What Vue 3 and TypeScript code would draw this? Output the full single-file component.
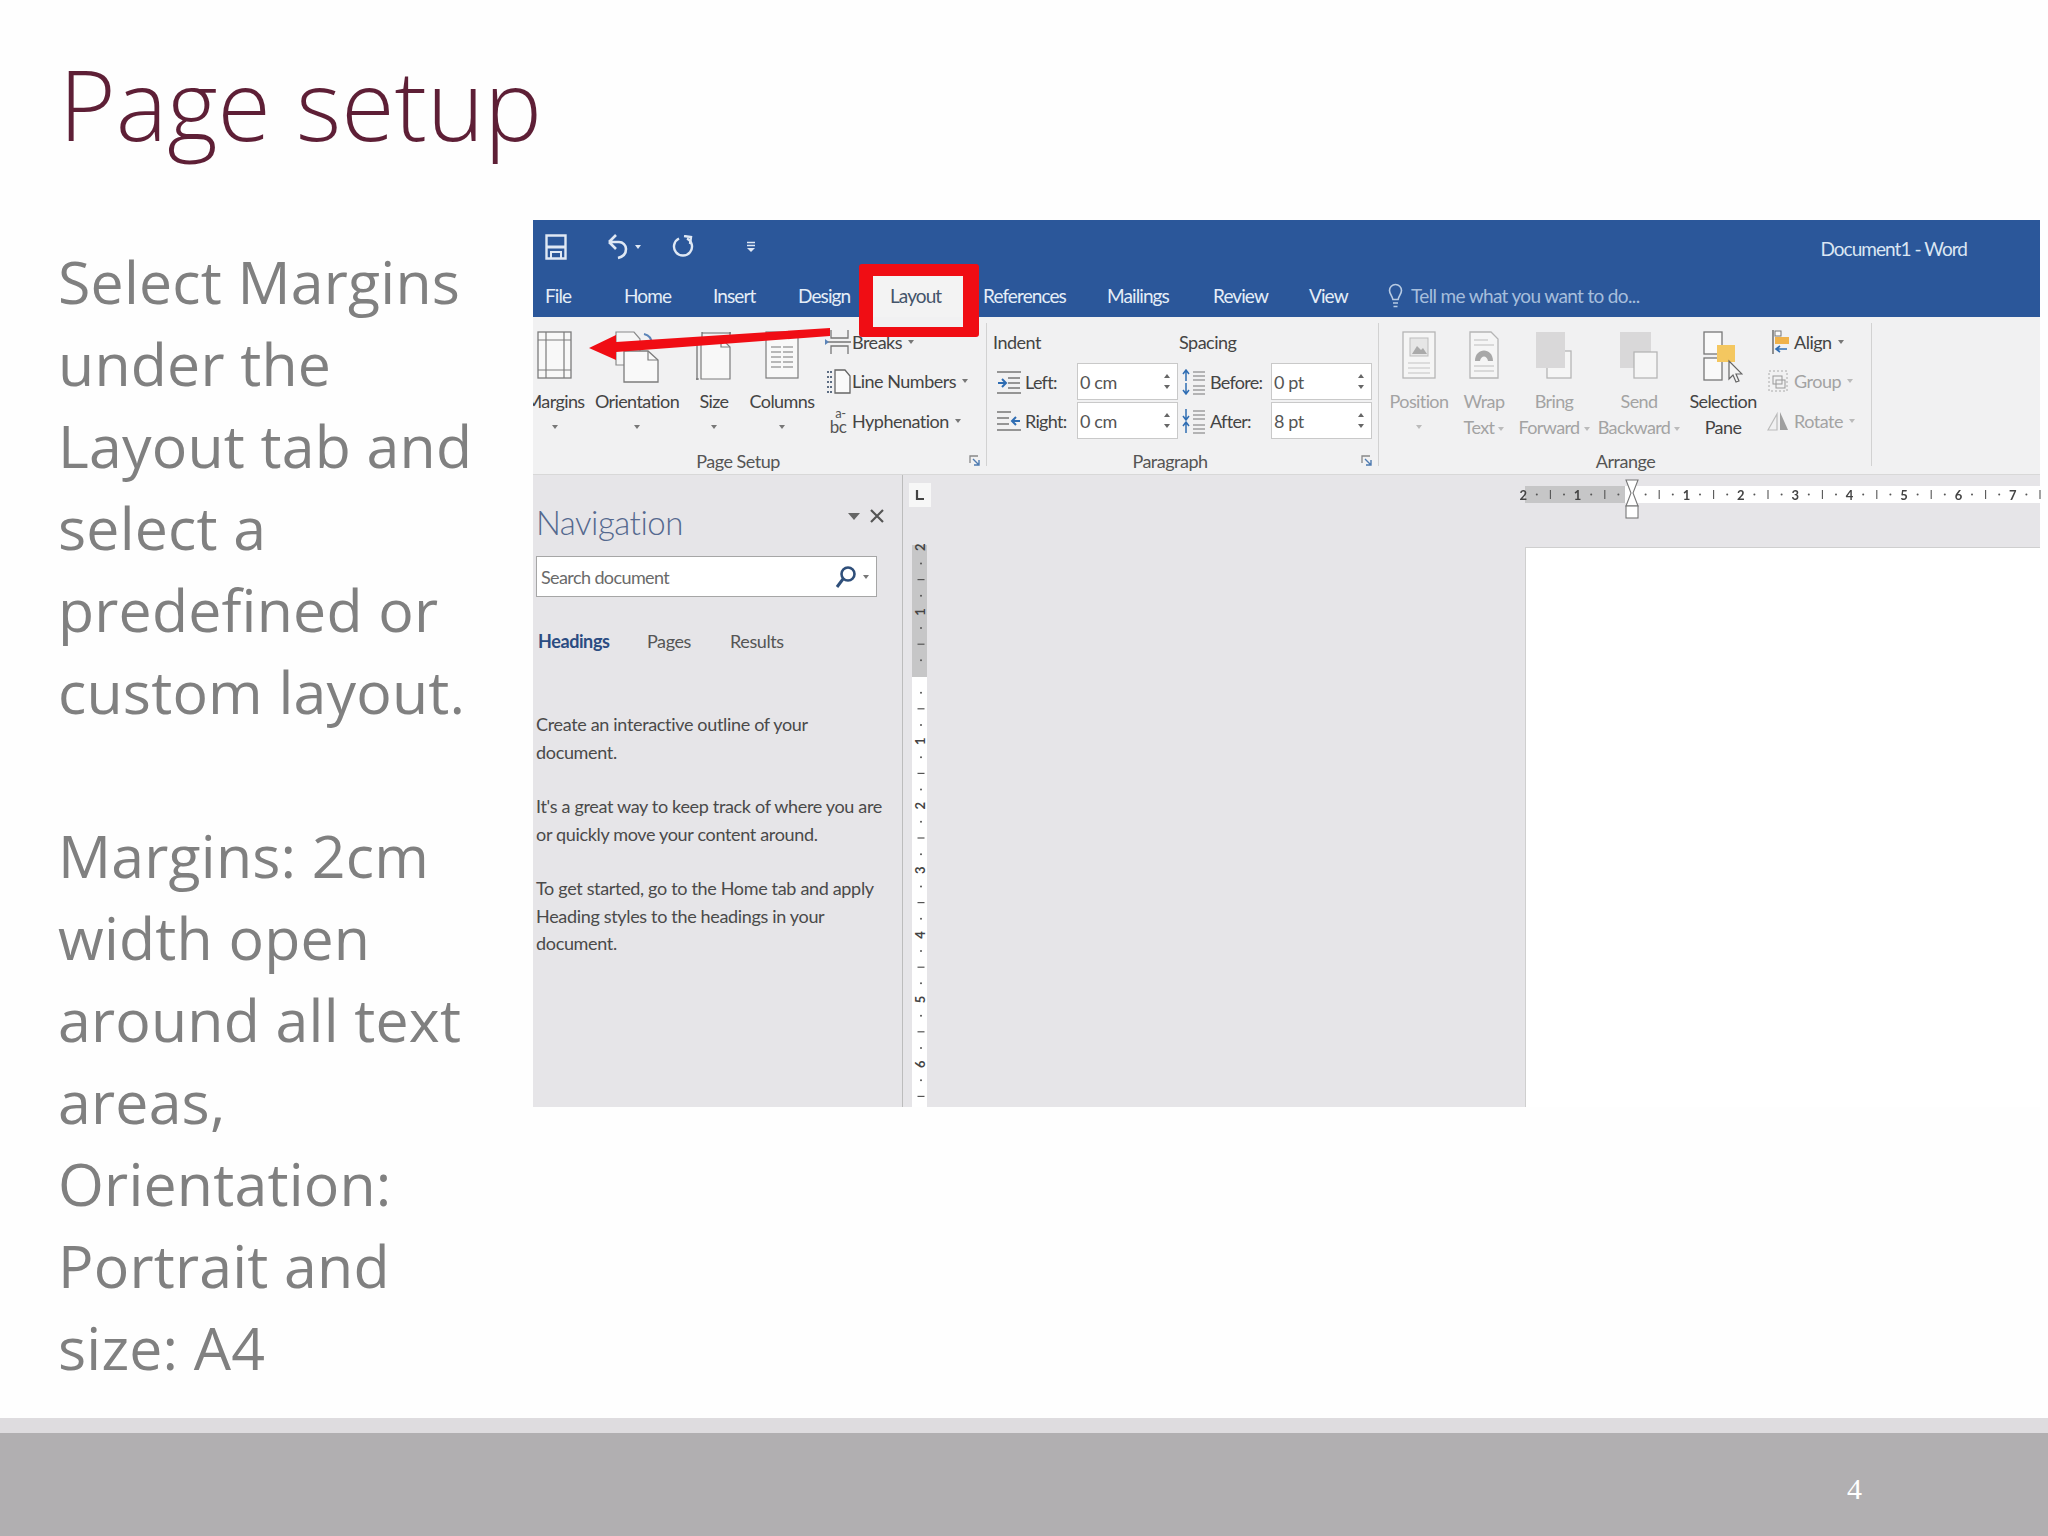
<script setup lang="ts">
const bodyOne: string[] = ['Select Margins', 'under the', 'Layout tab and', 'select a', 'predefined or', 'custom layout.']
const bodyTwo: string[] = ['Margins: 2cm', 'width open', 'around all text', 'areas,', 'Orientation:', 'Portrait and', 'size: A4']

interface Tab { label: string; width: number; active?: boolean }
const tabs: Tab[] = [
  { label: 'File', width: 79 },
  { label: 'Home', width: 89 },
  { label: 'Insert', width: 85 },
  { label: 'Design', width: 75 },
  { label: 'Layout', width: 110, active: true },
  { label: 'References', width: 124 },
  { label: 'Mailings', width: 106 },
  { label: 'Review', width: 96 },
  { label: 'View', width: 79 },
]

const hNums = [-2, -1, 1, 2, 3, 4, 5, 6, 7]
const hX = (n: number) => 107 + n * 54.4
const hTicks: { x: number; dash: boolean }[] = []
for (let i = -8; i <= 30; i++) {
  if (i % 4 === 0) continue
  hTicks.push({ x: 107 + i * 13.6, dash: Math.abs(i % 4) === 2 })
}
const vNums = [-2, -1, 1, 2, 3, 4, 5, 6]
const vY = (n: number) => 201.5 + n * 64.6
const vTicks: { y: number; dash: boolean }[] = []
for (let i = -8; i <= 27; i++) {
  if (i % 4 === 0) continue
  vTicks.push({ y: 201.5 + i * 16.15, dash: Math.abs(i % 4) === 2 })
}
</script>

<template>
  <div class="slide">
    <h1 class="title">Page setup</h1>
    <main class="content">
      <section class="copy">
        <p class="para">
          <span v-for="l in bodyOne" :key="l" class="line">{{ l }}</span>
        </p>
        <p class="para">
          <span v-for="l in bodyTwo" :key="l" class="line">{{ l }}</span>
        </p>
      </section>

      <section class="word">
        <div class="qat">
          <svg class="q-save" width="22" height="26" viewBox="0 0 22 26"><path d="M1.5 1.5h19v23h-19z" fill="none" stroke="#dfe8f4" stroke-width="2.4"/><path d="M1.5 13h19" stroke="#dfe8f4" stroke-width="3"/><path d="M6 25v-7h10v7" fill="none" stroke="#dfe8f4" stroke-width="2"/></svg>
          <svg class="q-undo" width="22" height="26" viewBox="0 0 22 26"><path d="M2 8l7-7M2 8l7 7M2 8h10a7 7 0 0 1 7 7c0 5-4 8-8 9" fill="none" stroke="#dfe8f4" stroke-width="2.6"/></svg>
          <span class="caret light q-c1"></span>
          <svg class="q-redo" width="22" height="24" viewBox="0 0 22 24"><path d="M7 3.5A9 9 0 1 0 15 3.5" fill="none" stroke="#dfe8f4" stroke-width="2.4"/><path d="M12 1l7 1-1 7" fill="none" stroke="#dfe8f4" stroke-width="2.4"/></svg>
          <svg class="q-more" width="10" height="12" viewBox="0 0 10 12"><path d="M1 1.5h8M1 4.5h8" stroke="#dfe8f4" stroke-width="1.4"/><path d="M1 7h8l-4 4z" fill="#dfe8f4"/></svg>
          <span class="doc-title">Document1 - Word</span>
        </div>

        <div class="tabs">
          <span
            v-for="t in tabs"
            :key="t.label"
            class="tab"
            :class="{ active: t.active }"
            :style="{ width: t.width + 'px' }"
          >{{ t.label }}</span>
          <svg class="bulb" width="15" height="26" viewBox="0 0 15 26"><path d="M7.5 1.5a6 6 0 0 1 6 6c0 3-2.6 5-3.4 9H4.9c-.8-4-3.4-6-3.4-9a6 6 0 0 1 6-6zM5 20h5M5.5 23.5h4" fill="none" stroke="#b8cbe3" stroke-width="1.6"/></svg>
          <span class="tell">Tell me what you want to do...</span>
        </div>

        <div class="ribbon">
          <div class="group g-page">
            <div class="g-body">
              <div class="big b-margins">
                <div class="big-icon">
                  <svg width="36" height="48" viewBox="0 0 36 48"><rect x="1" y="1" width="33" height="46" fill="#f8f8f8" stroke="#7c7c7c" stroke-width="1.3"/><path d="M9 1v46M27 1v46M1 9h33M1 39h33" stroke="#7c7c7c" stroke-width="1.2" fill="none"/></svg>
                </div>
                <span class="big-label">Margins</span><span class="caret c-big"></span>
              </div>
              <div class="big b-orient">
                <div class="big-icon">
                  <svg width="44" height="52" viewBox="0 0 44 52"><path d="M1 1h18l6 7v26H1z" fill="#f6f6f6" stroke="#8a8a8a" stroke-width="1.2"/><path d="M9 20h24l10 9v22H9z" fill="#f9f9f9" stroke="#7c7c7c" stroke-width="1.3"/><path d="M33 20v9h10" fill="none" stroke="#7c7c7c" stroke-width="1.2"/><path d="M29 3c5 1 8 5 8 11" fill="none" stroke="#5b84b8" stroke-width="2"/></svg>
                </div>
                <span class="big-label">Orientation</span><span class="caret c-big"></span>
              </div>
              <div class="big b-size">
                <div class="big-icon">
                  <svg width="36" height="50" viewBox="0 0 36 50"><path d="M6 2h29M6 1v5M34 1v5M1 8v41M0 8h3M0 48h3" stroke="#6a6a6a" stroke-width="1.2" fill="none"/><path d="M5 7h20l9 9v32H5z" fill="#f8f8f8" stroke="#7c7c7c" stroke-width="1.2"/><path d="M25 7v9h9" fill="none" stroke="#7c7c7c" stroke-width="1.2"/></svg>
                </div>
                <span class="big-label">Size</span><span class="caret c-big"></span>
              </div>
              <div class="big b-cols">
                <div class="big-icon">
                  <svg width="34" height="48" viewBox="0 0 34 48"><rect x="1" y="1" width="32" height="46" fill="#f8f8f8" stroke="#7c7c7c" stroke-width="1.2"/><path d="M6 16h10M18 16h10M6 21h10M18 21h10M6 26h10M18 26h10M6 31h10M18 31h10M6 36h10M18 36h10" stroke="#777" stroke-width="1.2"/></svg>
                </div>
                <span class="big-label">Columns</span><span class="caret c-big"></span>
              </div>
              <div class="smalls s-page">
                <div class="small">
                  <svg width="26" height="26" viewBox="0 0 26 26"><path d="M6 1v8h17V1M6 25v-8h17v8M3 13h23" fill="none" stroke="#777" stroke-width="1.3"/><path d="M0 10l4 3-4 3z" fill="#5b84b8"/></svg>
                  <span>Breaks</span><span class="caret"></span>
                </div>
                <div class="small">
                  <svg width="26" height="26" viewBox="0 0 26 26"><path d="M10 2h10l5 6v17H10z" fill="#fafafa" stroke="#666" stroke-width="1.3"/><path d="M2 4h5M2 9h5M2 14h5M2 19h5M2 24h5" stroke="#5d6d83" stroke-width="2" stroke-dasharray="2 1"/></svg>
                  <span>Line Numbers</span><span class="caret"></span>
                </div>
                <div class="small">
                  <span class="hy"><i class="hy-a">a-</i><i class="hy-b">bc</i></span>
                  <span>Hyphenation</span><span class="caret"></span>
                </div>
              </div>
            </div>
            <div class="g-label">Page Setup</div>
            <svg class="launcher" width="11" height="11" viewBox="0 0 11 11"><path d="M1 8V1h8" fill="none" stroke="#888" stroke-width="1.3"/><path d="M4 4l6 6M10 5v5H5" fill="none" stroke="#4d7ab0" stroke-width="1.4"/></svg>
          </div>

          <div class="group g-para">
            <div class="para-grid">
              <span class="h-indent">Indent</span>
              <span class="h-spacing">Spacing</span>

              <div class="pf-icon">
                <svg width="24" height="24" viewBox="0 0 24 24"><path d="M0 2h24M11 8h12M11 13h12M11 18h12M0 23h24" stroke="#777" stroke-width="1.3"/><path d="M1 13h7M5 9l4 4-4 4" fill="none" stroke="#2f6db3" stroke-width="2"/></svg>
              </div>
              <span class="pf-label">Left:</span>
              <div class="spin"><span>0 cm</span><span class="arrows"><i class="up"></i><i class="down"></i></span></div>
              <div class="pf-icon sp">
                <svg width="24" height="26" viewBox="0 0 24 26"><path d="M4 12V2M1 5l3-4 3 4M4 14v10M1 21l3 4 3-4" fill="none" stroke="#2f6db3" stroke-width="1.5"/><path d="M11 3h12M11 7h12M11 11h12M11 17h12M11 21h12M11 25h12" stroke="#777" stroke-width="1.1"/></svg>
              </div>
              <span class="pf-label">Before:</span>
              <div class="spin"><span>0 pt</span><span class="arrows"><i class="up"></i><i class="down"></i></span></div>

              <div class="pf-icon">
                <svg width="24" height="24" viewBox="0 0 24 24"><path d="M0 3h14M0 9h12M0 15h12M0 21h24" stroke="#777" stroke-width="1.3"/><path d="M23 12h-8M19 8l-4 4 4 4" fill="none" stroke="#2f6db3" stroke-width="2"/></svg>
              </div>
              <span class="pf-label">Right:</span>
              <div class="spin"><span>0 cm</span><span class="arrows"><i class="up"></i><i class="down"></i></span></div>
              <div class="pf-icon sp">
                <svg width="24" height="26" viewBox="0 0 24 26"><path d="M4 1v10M1 8l3 4 3-4M4 25V15M1 18l3-4 3 4" fill="none" stroke="#2f6db3" stroke-width="1.5"/><path d="M11 3h12M11 7h12M11 11h12M11 17h12M11 21h12M11 25h12" stroke="#777" stroke-width="1.1"/></svg>
              </div>
              <span class="pf-label">After:</span>
              <div class="spin"><span>8 pt</span><span class="arrows"><i class="up"></i><i class="down"></i></span></div>
            </div>
            <div class="g-label">Paragraph</div>
            <svg class="launcher" width="11" height="11" viewBox="0 0 11 11"><path d="M1 8V1h8" fill="none" stroke="#888" stroke-width="1.3"/><path d="M4 4l6 6M10 5v5H5" fill="none" stroke="#4d7ab0" stroke-width="1.4"/></svg>
          </div>

          <div class="group g-arrange">
            <div class="g-body">
              <div class="big off b-pos">
                <div class="big-icon">
                  <svg width="34" height="48" viewBox="0 0 34 48"><rect x="1" y="1" width="32" height="46" fill="#f5f5f5" stroke="#b5b5b5" stroke-width="1.3"/><rect x="8" y="7" width="18" height="18" fill="#e6e6e6" stroke="#bdbdbd"/><path d="M10 23l5-8 4 4 2-2 4 6z" fill="#aaa"/><path d="M6 32h22M6 37h22M6 42h22" stroke="#c4c4c4" stroke-width="1.2"/></svg>
                </div>
                <span class="big-label">Position</span><span class="caret c-big"></span>
              </div>
              <div class="big off b-wrap">
                <div class="big-icon">
                  <svg width="30" height="48" viewBox="0 0 30 48"><path d="M1 1h21l7 7v39H1z" fill="#f5f5f5" stroke="#b5b5b5" stroke-width="1.3"/><path d="M5 9h14M5 14h20M5 35h20M5 40h20" stroke="#bdbdbd" stroke-width="1.2"/><path d="M6 30c0-14 18-14 18 0h-5c-1-6-7-6-8 0z" fill="#a8a8a8"/></svg>
                </div>
                <span class="big-label">Wrap</span><span class="big-label">Text<span class="caret inl"></span></span>
              </div>
              <div class="big off b-bring">
                <div class="big-icon">
                  <svg width="38" height="48" viewBox="0 0 38 48"><rect x="12" y="20" width="24" height="27" fill="#f5f5f5" stroke="#b5b5b5" stroke-width="1.3"/><rect x="1" y="1" width="29" height="36" fill="#d9d8d9"/></svg>
                </div>
                <span class="big-label">Bring</span><span class="big-label">Forward<span class="caret inl"></span></span>
              </div>
              <div class="big off b-send">
                <div class="big-icon">
                  <svg width="40" height="48" viewBox="0 0 40 48"><rect x="1" y="1" width="31" height="36" fill="#d9d8d9"/><rect x="15" y="21" width="23" height="26" fill="#f5f5f5" stroke="#b5b5b5" stroke-width="1.3"/></svg>
                </div>
                <span class="big-label">Send</span><span class="big-label">Backward<span class="caret inl"></span></span>
              </div>
              <div class="big b-sel">
                <div class="big-icon">
                  <svg width="40" height="52" viewBox="0 0 40 52"><rect x="1" y="1" width="18" height="22" fill="#f9f9f9" stroke="#777" stroke-width="1.3"/><rect x="1" y="27" width="18" height="22" fill="#f9f9f9" stroke="#777" stroke-width="1.3"/><rect x="14" y="14" width="18" height="17" fill="#f4c760"/><path d="M26 30l0 18 4-4 3 7 3-1-3-7h6z" fill="#f4f4f4" stroke="#666" stroke-width="1.2"/></svg>
                </div>
                <span class="big-label">Selection</span><span class="big-label">Pane</span>
              </div>
              <div class="smalls s-arr">
                <div class="small">
                  <svg width="22" height="26" viewBox="0 0 22 26"><path d="M6 1v24" stroke="#666" stroke-width="1.4"/><rect x="8" y="2" width="6" height="5" fill="#fafafa" stroke="#777"/><rect x="8" y="8" width="14" height="7" fill="#f0b24a"/><path d="M20 20H10M13 17l-4 3 4 3" fill="none" stroke="#2f6db3" stroke-width="1.6"/></svg>
                  <span>Align</span><span class="caret"></span>
                </div>
                <div class="small off">
                  <svg width="22" height="26" viewBox="0 0 22 26"><rect x="2" y="3" width="18" height="20" fill="none" stroke="#aaa" stroke-dasharray="2 2"/><rect x="6" y="8" width="9" height="8" fill="none" stroke="#999"/><rect x="9" y="12" width="9" height="8" fill="none" stroke="#999"/></svg>
                  <span>Group</span><span class="caret"></span>
                </div>
                <div class="small off">
                  <svg width="22" height="26" viewBox="0 0 22 26"><path d="M1 22L10 6v16z" fill="none" stroke="#bbb" stroke-width="1.2"/><path d="M13 4l8 18h-8z" fill="#9f9f9f"/></svg>
                  <span>Rotate</span><span class="caret"></span>
                </div>
              </div>
            </div>
            <div class="g-label">Arrange</div>
          </div>
        </div>

        <div class="workspace">
          <aside class="nav">
            <div class="nav-head">
              <span class="nav-title">Navigation</span>
              <span class="nav-tools">
                <i class="nav-drop"></i>
                <svg width="16" height="16" viewBox="0 0 16 16"><path d="M2 2l12 12M14 2L2 14" stroke="#555" stroke-width="2.2"/></svg>
              </span>
            </div>
            <div class="search">
              <span>Search document</span>
              <svg class="mag" width="22" height="24" viewBox="0 0 22 24"><circle cx="13" cy="9" r="6.5" fill="none" stroke="#2f4f7a" stroke-width="2.6"/><path d="M8 14l-6 8" stroke="#2f4f7a" stroke-width="3"/></svg>
              <span class="caret"></span>
            </div>
            <div class="nav-tabs">
              <span class="nt-head">Headings</span>
              <span class="nt-pages">Pages</span>
              <span class="nt-res">Results</span>
            </div>
            <p class="nav-p"><span>Create an interactive outline of your</span><span>document.</span></p>
            <p class="nav-p"><span>It's a great way to keep track of where you are</span><span>or quickly move your content around.</span></p>
            <p class="nav-p"><span>To get started, go to the Home tab and apply</span><span>Heading styles to the headings in your</span><span>document.</span></p>
          </aside>

          <div class="docarea">
            <svg class="vruler" width="40" height="632" viewBox="0 0 40 632">
              <rect x="6" y="8" width="22" height="24" fill="#f7f7f7"/>
              <path d="M14 15v9h7" fill="none" stroke="#444" stroke-width="2.2"/>
              <rect x="9" y="70" width="15" height="132" fill="#c6c6c7"/>
              <rect x="9" y="202" width="15" height="430" fill="#ffffff"/>
              <g v-for="t in vTicks" :key="t.y">
                <path v-if="t.dash" :d="`M14.5 ${t.y}h7`" stroke="#555" stroke-width="1.2"/>
                <circle v-else cx="18" :cy="t.y" r="1" fill="#555"/>
              </g>
              <text
                v-for="n in vNums"
                :key="n"
                class="rnum"
                x="18"
                :y="vY(n) + 4"
                text-anchor="middle"
                :transform="`rotate(-90 18 ${vY(n)})`"
              >{{ Math.abs(n) }}</text>
            </svg>
            <svg class="hruler" width="515" height="72" viewBox="0 0 515 72">
              <rect x="0" y="11" width="100" height="17" fill="#c6c6c7"/>
              <rect x="100" y="11" width="415" height="17" fill="#ffffff"/>
              <g v-for="t in hTicks" :key="t.x">
                <path v-if="t.dash" :d="`M${t.x} 15v9`" stroke="#555" stroke-width="1.1"/>
                <circle v-else :cx="t.x" cy="19.5" r="1" fill="#555"/>
              </g>
              <text v-for="n in hNums" :key="n" class="rnum" :x="hX(n)" y="25" text-anchor="middle">{{ Math.abs(n) }}</text>
              <path d="M101 5h12l-5 13 5 13h-12l5-13z" fill="#fff" stroke="#777" stroke-width="1.1"/>
              <rect x="101" y="31" width="12" height="12" fill="#fff" stroke="#777" stroke-width="1.1"/>
            </svg>
            <div class="page"></div>
          </div>
        </div>

        <div class="callout"></div>
        <svg class="arrow" width="300" height="50" viewBox="0 0 300 50">
          <path d="M56 28 L83 15 L83 22 L297 8 L297 16 L83 32 L83 40 Z" fill="#f00d14"/>
        </svg>
      </section>
    </main>
    <footer class="foot">
      <div class="foot-band"></div>
      <div class="foot-main"><span class="num">4</span></div>
    </footer>
  </div>
</template>

<style>
html, body { margin: 0; padding: 0; background: #fefefe; }
</style>

<style scoped>
.slide { width: 2048px; height: 1536px; display: flex; flex-direction: column; background: #fefefe; overflow: hidden; font-family: "Open Sans", "Liberation Sans", sans-serif; }
.title { margin: 0; padding: 36px 0 0 59px; height: 180px; box-sizing: border-box; font-size: 97px; line-height: 134px; font-weight: 350; color: #5e1f36; letter-spacing: 0; flex: none; }
.content { flex: 1; display: flex; min-height: 0; }
.copy { width: 533px; flex: none; padding: 60px 0 0 58px; box-sizing: border-box; color: #808080; font-size: 59px; line-height: 82px; letter-spacing: 0.2px; }
.para { margin: 0 0 82px; }
.line { display: block; white-space: nowrap; }

.word { position: relative; margin-top: 40px; width: 1507px; height: 887px; display: flex; flex-direction: column; font-family: Lato, "Liberation Sans", sans-serif; font-size: 18px; color: #444; filter: blur(0.45px); }
.qat { background: #2b579a; display: flex; align-items: center; position: relative; flex: none; padding-top: 8px; height: 37px; }
.q-save { margin-left: 12px; }
.q-undo { margin-left: 40px; }
.q-c1 { margin-left: 5px; }
.q-redo { margin-left: 31px; }
.q-more { margin-left: 52px; }
.doc-title { margin-left: auto; margin-right: 73px; color: #dbe6f3; font-size: 19px; letter-spacing: -0.95px; margin-top: 3px; }
.caret { display: inline-block; width: 0; height: 0; border-left: 3.5px solid transparent; border-right: 3.5px solid transparent; border-top: 4px solid #777; margin-left: 6px; flex: none; }
.caret.light { border-top-color: #dfe8f4; }
.caret.inl { margin-left: 4px; vertical-align: middle; border-top-color: #b8b8b8; }

.tabs { height: 52px; background: #2b579a; display: flex; padding-left: 12px; flex: none; }
.tab { display: block; height: 52px; line-height: 62px; color: #e4edf7; font-size: 19px; letter-spacing: -0.9px; box-sizing: border-box; white-space: nowrap; }
.tab.active { width: 90px; background: #f3f3f3; color: #44546a; padding-left: 17px; margin-right: 20px; max-width: 90px; }
.bulb { align-self: center; margin: 10px 8px 0 0; }
.tell { line-height: 62px; color: #a6bedc; font-size: 19px; letter-spacing: -0.65px; }

.ribbon { height: 158px; flex: none; display: flex; background: #f1f1f2; border-bottom: 1px solid #d8d8d8; box-sizing: border-box; overflow: hidden; }
.group { position: relative; display: flex; flex-direction: column; box-sizing: border-box; flex: none; }
.group::after { content: ""; position: absolute; right: 0; top: 6px; bottom: 8px; width: 1px; background: #d2d2d2; }
.g-page { width: 454px; }
.g-para { width: 392px; }
.g-arrange { width: 493px; }
.g-body { display: flex; height: 131px; flex: none; }
.g-label { height: 26px; line-height: 26px; text-align: center; color: #555; letter-spacing: -0.5px; flex: none; }
.g-page .g-label { padding-right: 44px; }
.g-para .g-label { padding-right: 26px; }
.launcher { position: absolute; right: 7px; bottom: 8px; }
.big { display: flex; flex-direction: column; align-items: center; flex: none; white-space: nowrap; }
.big-icon { padding-top: 14px; flex: none; display: flex; align-items: flex-start; justify-content: center; height: 57px; }
.big-label { line-height: 26px; height: 26px; letter-spacing: -0.6px; color: #444; }
.c-big { margin: 11px 0 0; }
.big.off .big-label { color: #a3a3a3; }
.big.off .caret { border-top-color: #bbb; }
.b-margins { width: 44px; }
.b-orient { width: 120px; }
.b-size { width: 34px; margin-right: 8px; }
.b-cols { width: 86px; }
.b-pos { width: 80px; }
.b-wrap { width: 50px; }
.b-bring { width: 90px; }
.b-send { width: 80px; }
.b-sel { width: 88px; }
.smalls { display: flex; flex-direction: column; padding-top: 5px; flex: none; }
.s-page { width: 160px; }
.s-arr { width: 100px; }
.small { height: 39.5px; display: flex; align-items: center; letter-spacing: -0.5px; white-space: nowrap; }
.small svg { margin-right: 1px; flex: none; }
.s-arr .small svg { margin-right: 5px; }
.small.off { color: #a3a3a3; }
.small.off .caret { border-top-color: #bbb; }
.hy { width: 26px; margin-right: 1px; display: flex; flex-direction: column; align-items: center; color: #555; }
.hy i { font-style: normal; display: block; }
.hy-a { font-size: 13px; line-height: 12px; margin-left: 5px; }
.hy-b { font-size: 17px; line-height: 16px; }
.para-grid { height: 131px; flex: none; box-sizing: border-box; padding-top: 12px; display: grid; grid-template-columns: 38px 52px 101px 32px 61px 101px; grid-template-rows: 33px 39px 39px; align-items: center; }
.h-indent { grid-column: 1 / 4; align-self: start; margin-left: 6px; line-height: 26px; letter-spacing: -0.5px; }
.h-spacing { grid-column: 4 / 7; align-self: start; margin-left: 1px; line-height: 26px; letter-spacing: -0.5px; }
.pf-icon { display: flex; padding-left: 10px; }
.pf-icon.sp { padding-left: 4px; }
.pf-label { letter-spacing: -0.7px; }
.spin { height: 37px; background: #fff; border: 1px solid #c9c9c9; box-sizing: border-box; display: flex; align-items: center; justify-content: space-between; padding: 0 7px 0 2px; letter-spacing: -0.4px; color: #555; }
.arrows { display: flex; flex-direction: column; gap: 7px; }
.arrows i { display: block; width: 0; height: 0; border-left: 3px solid transparent; border-right: 3px solid transparent; }
.arrows .up { border-bottom: 4px solid #666; }
.arrows .down { border-top: 4px solid #666; }

.workspace { flex: 1; display: flex; min-height: 0; background: #e6e5e8; }
.nav { width: 370px; flex: none; box-sizing: border-box; padding: 0 0 0 3px; border-right: 1px solid #bcbcbc; }
.nav-head { margin-top: 27px; height: 40px; display: flex; align-items: center; }
.nav-title { font-size: 33px; font-weight: 300; color: #55698f; letter-spacing: -0.5px; line-height: 40px; }
.nav-tools { margin-left: auto; display: flex; align-items: center; gap: 9px; margin-right: 17px; margin-top: -12px; }
.nav-drop { display: block; width: 0; height: 0; border-left: 6px solid transparent; border-right: 6px solid transparent; border-top: 7px solid #666; }
.search { margin-top: 14px; margin-left: 0; width: 341px; height: 41px; box-sizing: border-box; background: #fff; border: 1px solid #a6a6a6; display: flex; align-items: center; padding: 0 7px 0 4px; color: #6a6a6a; letter-spacing: -0.6px; }
.mag { margin-left: auto; }
.nav-tabs { margin-top: 30px; height: 28px; line-height: 28px; display: flex; letter-spacing: -0.4px; color: #555; }
.nt-head { width: 111px; font-weight: 700; color: #2b4c82; padding-left: 2px; box-sizing: border-box; }
.nt-pages { width: 83px; }
.nav-p { margin: 0 0 27px; line-height: 27.5px; letter-spacing: -0.33px; color: #4a4a4a; white-space: nowrap; }
.nav-tabs + .nav-p { margin-top: 56px; }
.nav-p span { display: block; }

.docarea { flex: 1; display: grid; grid-template-columns: 622px 1fr; grid-template-rows: 72px 1fr; min-width: 0; }
.vruler { grid-column: 1; grid-row: 1 / 3; display: block; }
.hruler { grid-column: 2; grid-row: 1; display: block; overflow: visible; }
.page { grid-column: 2; grid-row: 2; background: #fff; border-top: 1px solid #cfcfcf; border-left: 1px solid #cfcfcf; }
.rnum { font-family: Lato, "Liberation Sans", sans-serif; font-size: 13px; fill: #444; font-weight: 700; }

.callout { position: absolute; left: 326px; top: 44px; width: 120px; height: 73px; box-sizing: border-box; border: solid #f00d14; border-width: 12px 16px 10px 14px; border-radius: 3px; }
.arrow { position: absolute; left: 0; top: 100px; overflow: visible; }

.foot { flex: none; height: 118px; display: flex; flex-direction: column; }
.foot-band { height: 15px; background: #dedcdf; }
.foot-main { flex: 1; background: #b1afb1; display: flex; justify-content: flex-end; padding-right: 186px; align-items: center; }
.num { color: #fff; font-family: "Liberation Serif", serif; font-size: 30px; line-height: 1; margin-top: 9px; }
</style>
